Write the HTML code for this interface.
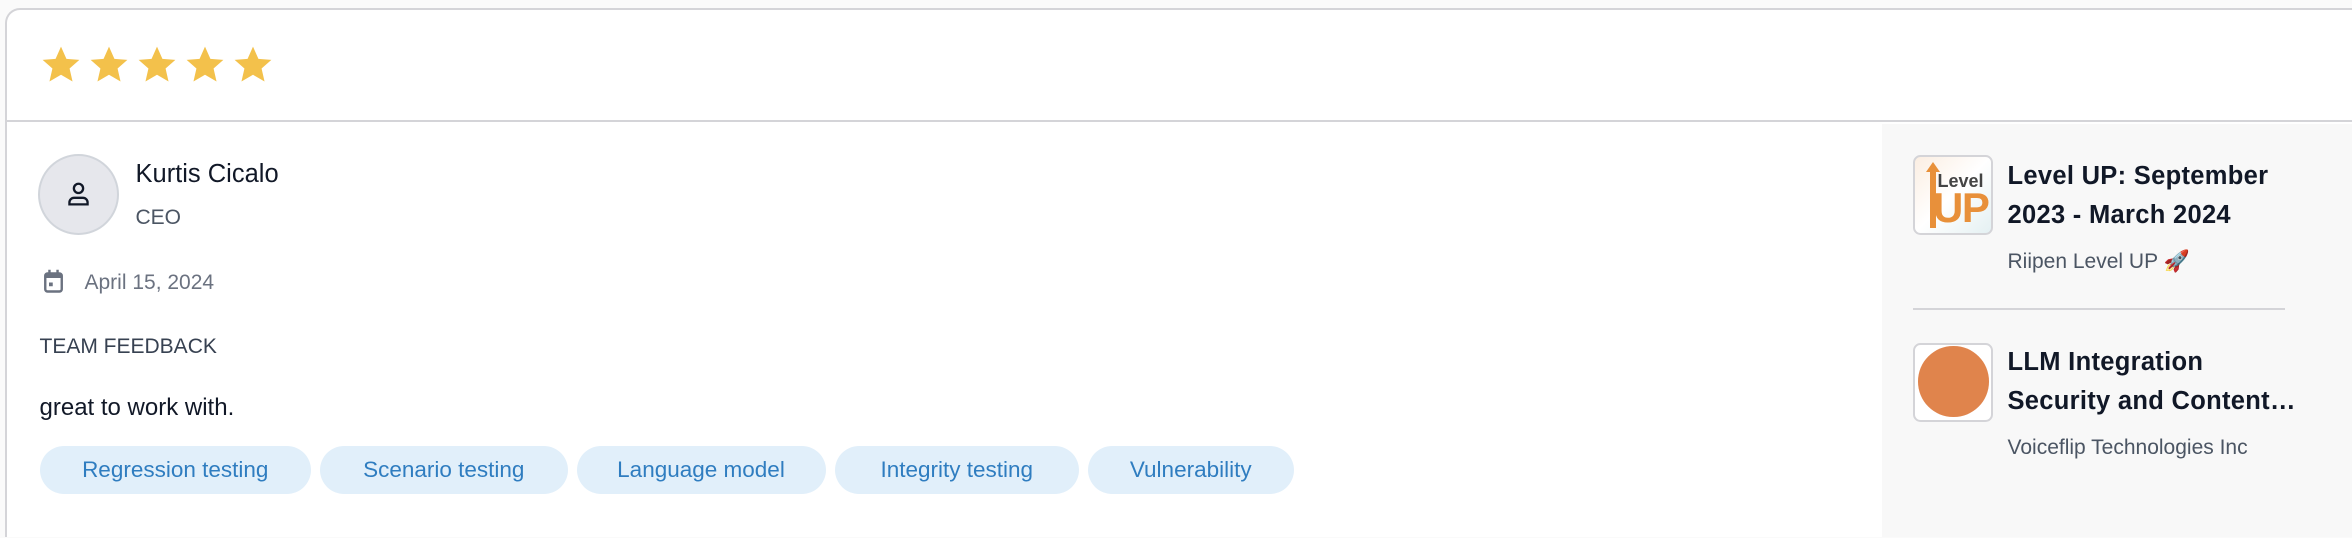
<!DOCTYPE html>
<html><head><meta charset="utf-8"><style>
*{box-sizing:border-box;margin:0;padding:0}
html,body{width:2352px;height:538px;overflow:hidden;background:#fafafa}
body{zoom:1.5;font-family:"Liberation Sans",sans-serif;position:relative;width:1568px;height:358px}
.card{position:absolute;left:3px;top:5px;width:1565px;height:353px;background:#fff;border:1.5px solid #d4d4d8;border-right:none;border-bottom:none;border-radius:10px 0 0 0;overflow:hidden}
.hdr{height:75px;border-bottom:1.5px solid #d4d4d8;position:relative}
.star{position:absolute;top:23px;width:28px;height:28px}
.a{position:absolute}
.side{position:absolute;left:1250px;top:76px;width:320px;height:290px;background:#f8f8f8}
.tag{position:absolute;top:291px;height:32px;border-radius:16px;background:#e1effa;color:#2f7dc0;font-size:15px;line-height:32px;text-align:center}
.logo{position:absolute;width:53px;height:53px;border:1.5px solid #d4d4d8;border-radius:5px;background:#fff;overflow:hidden}
.tt{position:absolute;font-size:17px;font-weight:bold;color:#111827;line-height:26px;white-space:nowrap;letter-spacing:0.2px}
.st{position:absolute;font-size:14px;color:#4b5563;white-space:nowrap}
</style></head><body>
<div class="card">
 <div class="hdr">
  <svg class="star" style="left:22px" viewBox="0 0 24 24"><path fill="#f3c14b" d="M12 1.5l3.1 7 7.4.6-5.6 4.9 1.7 7.4L12 17.6l-6.6 3.8 1.7-7.4L1.5 9.1l7.4-.6z"/></svg>
  <svg class="star" style="left:54px" viewBox="0 0 24 24"><path fill="#f3c14b" d="M12 1.5l3.1 7 7.4.6-5.6 4.9 1.7 7.4L12 17.6l-6.6 3.8 1.7-7.4L1.5 9.1l7.4-.6z"/></svg>
  <svg class="star" style="left:86px" viewBox="0 0 24 24"><path fill="#f3c14b" d="M12 1.5l3.1 7 7.4.6-5.6 4.9 1.7 7.4L12 17.6l-6.6 3.8 1.7-7.4L1.5 9.1l7.4-.6z"/></svg>
  <svg class="star" style="left:118px" viewBox="0 0 24 24"><path fill="#f3c14b" d="M12 1.5l3.1 7 7.4.6-5.6 4.9 1.7 7.4L12 17.6l-6.6 3.8 1.7-7.4L1.5 9.1l7.4-.6z"/></svg>
  <svg class="star" style="left:150px" viewBox="0 0 24 24"><path fill="#f3c14b" d="M12 1.5l3.1 7 7.4.6-5.6 4.9 1.7 7.4L12 17.6l-6.6 3.8 1.7-7.4L1.5 9.1l7.4-.6z"/></svg>
 </div>
 <div class="a" style="left:21px;top:96px;width:54px;height:54px;border-radius:50%;background:#e6e7ec;border:1.5px solid #d1d5db"></div>
 <svg class="a" style="left:37px;top:112px" width="22" height="22" viewBox="0 0 20 20" fill="none" stroke="#111827" stroke-width="1.4"><circle cx="10" cy="6.3" r="2.8"/><path d="M4.5 16v-1.2a2.8 2.8 0 0 1 2.8-2.8h5.4a2.8 2.8 0 0 1 2.8 2.8V16z"/></svg>
 <div class="a" style="left:86px;top:100px;font-size:17px;font-weight:500;color:#111827">Kurtis Cicalo</div>
 <div class="a" style="left:86px;top:131px;font-size:14px;color:#4b5563">CEO</div>
 <svg class="a" style="left:24px;top:173px" width="14" height="16" viewBox="0 0 14 16"><rect x="1.5" y="3" width="11" height="12" rx="1.5" fill="none" stroke="#6b7280" stroke-width="1.6"/><rect x="1.5" y="3" width="11" height="3" fill="#6b7280"/><rect x="3.5" y="0.5" width="1.6" height="3" fill="#6b7280"/><rect x="8.9" y="0.5" width="1.6" height="3" fill="#6b7280"/><rect x="4" y="9" width="2.5" height="2.5" fill="#6b7280"/></svg>
 <div class="a" style="left:52px;top:174px;font-size:14px;color:#6b7280">April 15, 2024</div>
 <div class="a" style="left:22px;top:217px;font-size:14px;color:#374151">TEAM FEEDBACK</div>
 <div class="a" style="left:22px;top:256px;font-size:16px;color:#111827">great to work with.</div>
 <div class="tag" style="left:22px;width:181px">Regression testing</div>
 <div class="tag" style="left:209px;width:165px">Scenario testing</div>
 <div class="tag" style="left:380px;width:166px">Language model</div>
 <div class="tag" style="left:552px;width:163px">Integrity testing</div>
 <div class="tag" style="left:721px;width:137px">Vulnerability</div>
 <div class="side">
  <div class="logo" style="left:21px;top:21px;background:linear-gradient(135deg,#fbeee2,#fff 50%,#e4f0f2)">
   <div class="a" style="left:10px;top:7px;width:4px;height:40px;background:#e8903a"></div>
   <div class="a" style="left:7px;top:3px;width:0;height:0;border-left:5px solid transparent;border-right:5px solid transparent;border-bottom:7px solid #e8903a"></div>
   <div class="a" style="left:15px;top:9px;font-size:12px;font-weight:bold;color:#444">Level</div>
   <div class="a" style="left:12px;top:18px;font-size:28px;font-weight:bold;color:#e8903a;letter-spacing:-1px">UP</div>
  </div>
  <div class="tt" style="left:84px;top:22px">Level UP: September<br>2023 - March 2024</div>
  <div class="st" style="left:84px;top:84px">Riipen Level UP 🚀</div>
  <div class="a" style="left:21px;top:123px;width:248px;height:1.5px;background:#d4d4d8"></div>
  <div class="logo" style="left:21px;top:146px"><div class="a" style="left:2px;top:1px;width:47px;height:47px;border-radius:50%;background:#e0844c"></div></div>
  <div class="tt" style="left:84px;top:146px">LLM Integration<br>Security and Content…</div>
  <div class="st" style="left:84px;top:208px">Voiceflip Technologies Inc</div>
 </div>
</div>
</body></html>
